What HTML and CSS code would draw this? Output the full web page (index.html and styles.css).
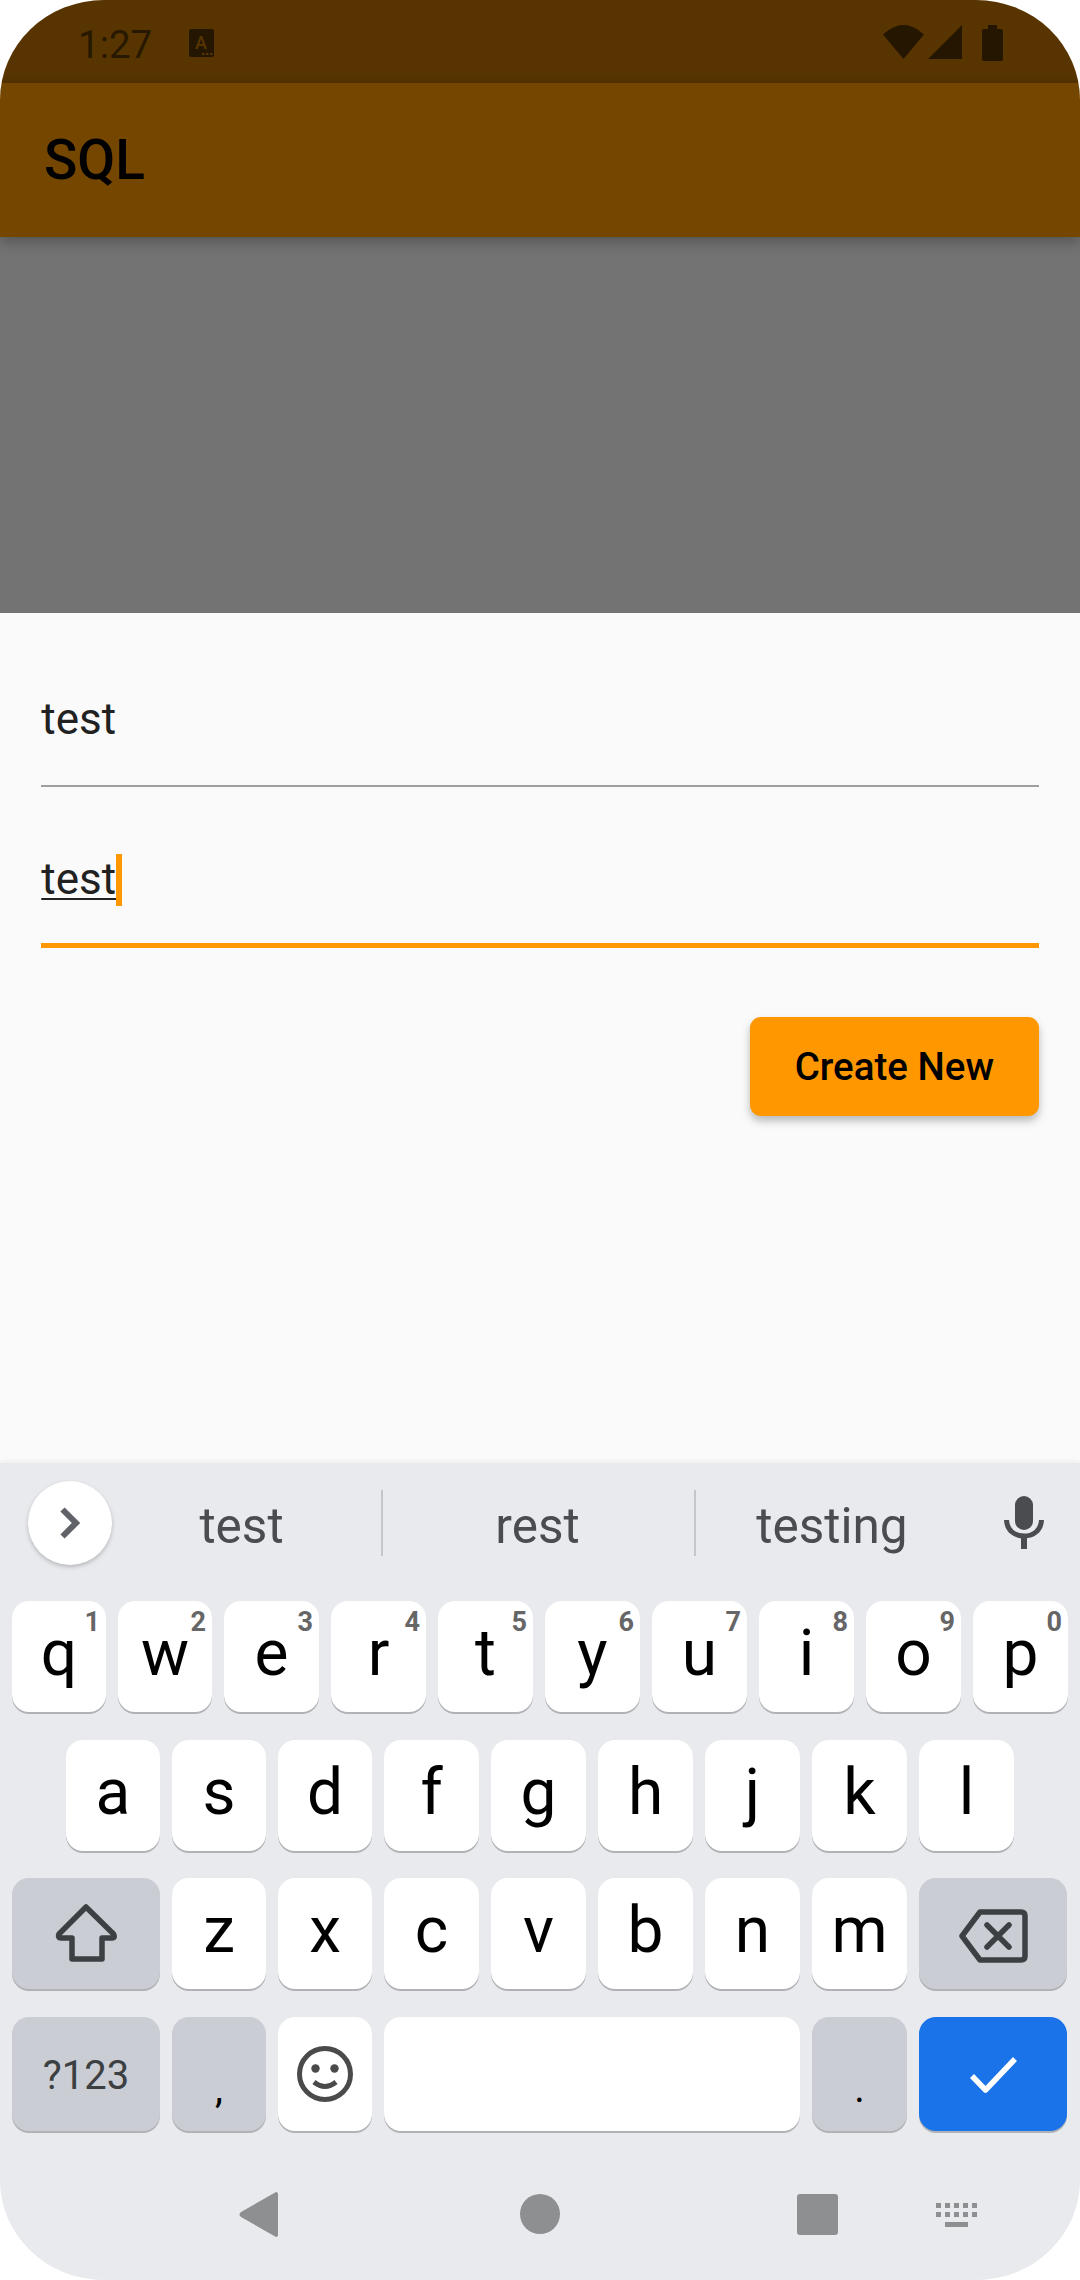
FILE: index.html
```html
<!DOCTYPE html>
<html lang="en">
<head>
<meta charset="utf-8">
<title>SQL</title>
<link rel="stylesheet" href="styles.css">
</head>
<body>
<div class="phone">
  <header class="status">
    <span class="clock">1:27</span>
    <svg class="ic-a" viewBox="0 0 25 28"><rect width="25" height="28" rx="2.5" class="st"/><text x="12" y="19.5" text-anchor="middle" class="st-a">A</text><rect x="13" y="24" width="2.5" height="2" class="st-d"/><rect x="17" y="24" width="2.5" height="2" class="st-d"/><rect x="21" y="24" width="2.5" height="2" class="st-d"/></svg>
    <div class="status-right">
      <svg class="ic-wifi" viewBox="0 0 41 34"><path class="st" d="M20.5 34 0 9.5Q20.5-9.5 41 9.5Z"/></svg>
      <svg class="ic-signal" viewBox="0 0 34 34"><path class="st" d="M34 0V34H0Z"/></svg>
      <svg class="ic-batt" viewBox="0 0 21 36"><path class="st" d="M6 0H15V4H19Q21 4 21 6V34Q21 36 19 36H2Q0 36 0 34V6Q0 4 2 4H6Z"/></svg>
    </div>
  </header>
  <div class="appbar">SQL</div>
  <div class="scrim"></div>
  <main class="sheet">
    <div class="field"><span class="value">test</span></div>
    <div class="field field-focus"><span class="value value-edit">test<i class="caret"></i></span></div>
    <div class="actions"><button class="btn">Create New</button></div>
  </main>
  <section class="keyboard">
    <div class="strip">
      <div class="chip"><svg class="ic-chev" viewBox="0 0 22 32"><path d="M3.500 2.500 17 16 3.500 29.500"/></svg></div>
      <div class="sug sug-1">test</div>
      <div class="sep"></div>
      <div class="sug sug-2">rest</div>
      <div class="sep"></div>
      <div class="sug sug-3">testing</div>
      <svg class="ic-mic" viewBox="0 0 40 53"><rect x="11" y="0" width="18" height="34" rx="9"/><path class="mic-arc" d="M2.5 24C3 34 10 40 20 40S37 34 37.500 24"/><rect x="17" y="38" width="6" height="15"/></svg>
    </div>
    <div class="rows">
      <div class="row">
        <div class="key key-n">q<sup class="num">1</sup></div>
        <div class="key key-n">w<sup class="num">2</sup></div>
        <div class="key">e<sup class="num">3</sup></div>
        <div class="key">r<sup class="num">4</sup></div>
        <div class="key">t<sup class="num">5</sup></div>
        <div class="key">y<sup class="num">6</sup></div>
        <div class="key">u<sup class="num">7</sup></div>
        <div class="key">i<sup class="num">8</sup></div>
        <div class="key">o<sup class="num">9</sup></div>
        <div class="key">p<sup class="num">0</sup></div>
      </div>
      <div class="row row-home">
        <div class="key key-n">a</div><div class="key key-n">s</div><div class="key key-n">d</div><div class="key">f</div><div class="key">g</div><div class="key">h</div><div class="key">j</div><div class="key">k</div><div class="key">l</div>
      </div>
      <div class="row">
        <div class="key key-wide key-fn"><svg class="ic-shift" viewBox="0 0 62 59"><path d="M31 4 4 31Q2.500 35 6 35H17V56H47V35H57Q60.500 35 58.500 31Z"/></svg></div>
        <div class="key key-n">z</div><div class="key key-n">x</div><div class="key">c</div><div class="key">v</div><div class="key">b</div><div class="key">n</div><div class="key">m</div>
        <div class="key key-wide key-fn"><svg class="ic-back" viewBox="0 0 69 54"><path d="M21 3H62Q66 3 66 7V47Q66 51 62 51H21L3 27Z"/><path d="M28 16 50 38M50 16 28 38"/></svg></div>
      </div>
      <div class="row row-last">
        <div class="key key-wide key-fn key-sym">?123</div>
        <div class="key key-n key-fn key-punct">,</div>
        <div class="key key-n key-icon"><svg class="ic-emoji" viewBox="0 0 56 56"><circle class="em-o" cx="28" cy="28" r="25.500"/><circle class="em-e" cx="18.500" cy="22.500" r="4.200"/><circle class="em-e" cx="37.500" cy="22.500" r="4.200"/><path class="em-o" d="M17 36Q28 45 39 36"/></svg></div>
        <div class="key key-space"></div>
        <div class="key key-fn key-punct">.</div>
        <div class="key key-wide key-enter"><svg class="ic-check" viewBox="0 0 48 38"><path d="M3 20 16.500 34 46 3"/></svg></div>
      </div>
    </div>
    <nav class="nav">
      <svg class="nav-back" viewBox="0 0 39 45"><path d="M37 0Q39 0 39 2V43Q39 45 37 45L2 25Q-1 22.500 2 20Z"/></svg>
      <div class="nav-home"></div>
      <div class="nav-recent"></div>
      <svg class="nav-kbd" viewBox="0 0 41 24"><path d="M0 0H5V5H0ZM9 0H14V5H9ZM18 0H23V5H18ZM27 0H32V5H27ZM36 0H41V5H36ZM0 9H5V14H0ZM9 9H14V14H9ZM18 9H23V14H18ZM27 9H32V14H27ZM36 9H41V14H36ZM9 19H32V24H9Z"/></svg>
    </nav>
  </section>
</div>
</body>
</html>
```
FILE: styles.css
```css
* { box-sizing: border-box; }
html, body { margin: 0; padding: 0; background: #fff; }
body { font-family: Roboto, "Liberation Sans", sans-serif; }

.phone {
  width: 1080px;
  height: 2280px;
  border-radius: 104px / 100px;
  overflow: hidden;
  display: flex;
  flex-direction: column;
  background: #fafafa;
}

/* status bar */
.status {
  flex: 0 0 83px;
  background: #583500;
  display: flex;
  align-items: flex-start;
  padding: 22px 77px 0 78px;
}
.clock { font-size: 38.5px; line-height: 45px; color: #271800; }
.st { fill: #241600; }
.st-a { fill: #583500; font: 500 18px Roboto, sans-serif; }
.st-d { fill: #583500; }
.ic-a { width: 25px; height: 28px; margin: 7px 0 0 37px; }
.status-right { margin-left: auto; display: flex; align-items: flex-start; margin-top: 3px; }
.ic-wifi { width: 41px; height: 34px; }
.ic-signal { width: 34px; height: 34px; margin-left: 4px; }
.ic-batt { width: 21px; height: 36px; margin-left: 20px; }

/* app bar */
.appbar {
  flex: 0 0 154px;
  background: #744600;
  color: #000;
  font-size: 55px;
  font-weight: 500;
  line-height: 154px;
  padding-left: 44px;
  position: relative;
  z-index: 1;
  box-shadow: 0 4px 14px rgba(0, 0, 0, .3);
}
.scrim { flex: 0 0 376px; background: #737373; }

/* form sheet */
.sheet { flex: 1; background: #fafafa; padding: 80px 41.250px 0; }
.field {
  font-size: 44px;
  line-height: 52px;
  color: #212121;
  padding-bottom: 40px;
  border-bottom: 2.750px solid #9e9e9e;
}
.field-focus { margin-top: 66.250px; padding-bottom: 38px; border-bottom: 5.500px solid #ff9800; }
.value { display: inline-block; position: relative; }
.value-edit { text-decoration: underline; text-decoration-thickness: 2px; text-underline-offset: 4px; }
.caret { position: absolute; left: 100%; top: 1px; width: 5.500px; height: 52px; background: #ff9800; }
.actions { display: flex; justify-content: flex-end; margin-top: 68.500px; }
.btn {
  width: 288.750px;
  height: 99px;
  border: 0;
  border-radius: 11px;
  background: #ff9800;
  color: #000;
  font: 500 38.500px Roboto, sans-serif;
  box-shadow: 0 5px 8px rgba(0, 0, 0, .26);
  padding: 0;
}

/* keyboard */
.keyboard {
  flex: 0 0 817px;
  background: #e8eaed;
  display: flex;
  flex-direction: column;
  box-shadow: 0 -2px 6px rgba(0, 0, 0, .05);
  position: relative;
}
.strip { flex: 0 0 138px; display: flex; align-items: flex-start; padding-left: 28px; }
.chip {
  flex: 0 0 84px;
  height: 84px;
  margin-top: 18px;
  border-radius: 50%;
  background: #fff;
  box-shadow: 0 2px 4px rgba(0, 0, 0, .22);
  display: flex;
  align-items: center;
  justify-content: center;
}
.ic-chev { width: 22px; height: 32px; fill: none; stroke: #5f6368; stroke-width: 6; }
.sug { font-size: 49.500px; line-height: 58px; color: #4a4c50; text-align: center; margin-top: 34px; }
.sug-1 { width: 269px; padding-right: 10px; }
.sug-2 { width: 311px; padding-right: 2px; }
.sug-3 { width: 272px; }
.sep { flex: 0 0 2px; height: 66px; margin-top: 27px; background: #c4c6ca; }
.ic-mic { width: 40px; height: 53px; margin: 33px 0 0 36px; fill: #4a4c50; }
.mic-arc { fill: none; stroke: #4a4c50; stroke-width: 5; }

.rows { display: flex; flex-direction: column; gap: 27.500px; padding: 0 12px; }
.row { display: flex; gap: 12px; height: 111px; }
.row-home { padding: 0 54px; }
.row-last { height: 114px; }
.key {
  flex: 0 0 95px;
  position: relative;
  background: #fff;
  border-radius: 17px;
  box-shadow: 0 2px 0 #b0b2b6;
  color: #000;
  font-size: 64px;
  line-height: 75px;
  padding-top: 15px;
  text-align: center;
}
.key-n { flex-basis: 94px; }
.key-wide { flex: 0 0 148px; }
.key-fn { background: #cacdd4; }
.key-space { flex: 0 0 416px; }
.key-enter { background: #1a73e8; }
.key-sym { font-size: 40px; line-height: 47px; padding-top: 35px; color: #3c4043; }
.key-punct { font-size: 40px; line-height: 47px; padding-top: 48px; }
.num {
  position: absolute;
  top: 5px;
  right: 6px;
  font-size: 27px;
  line-height: 32px;
  font-weight: 700;
  color: #666;
  vertical-align: baseline;
}
.key svg { display: block; margin: 0 auto; }
.key-fn svg, .key-icon svg, .key-enter svg { fill: none; stroke-linejoin: round; }
.ic-shift { width: 62px; height: 59px; margin-top: 10px !important; stroke: #3c4043; stroke-width: 5.500; }
.ic-back { width: 69px; height: 54px; margin-top: 16px !important; stroke: #3c4043; stroke-width: 5.500; stroke-linecap: round; }
.ic-emoji { width: 56px; height: 56px; margin-top: 14px !important; }
.em-o { fill: none; stroke: #4a4a4a; stroke-width: 5; }
.em-e { fill: #4a4a4a; }
.ic-check { width: 48px; height: 38px; margin-top: 24px !important; stroke: #fff; stroke-width: 5.500; }

/* navigation bar */
.nav { flex: 1; display: flex; align-items: flex-start; padding: 61.500px 0 0 239px; }
.nav-back { width: 39px; height: 45px; fill: #8e8f91; }
.nav-home { width: 40px; height: 40px; margin: 2px 0 0 242px; border-radius: 50%; background: #8e8f91; }
.nav-recent { width: 41px; height: 41px; margin: 2px 0 0 237px; border-radius: 3px; background: #8e8f91; }
.nav-kbd { width: 41px; height: 24px; margin: 11px 0 0 98px; fill: #8e8f91; }
```
